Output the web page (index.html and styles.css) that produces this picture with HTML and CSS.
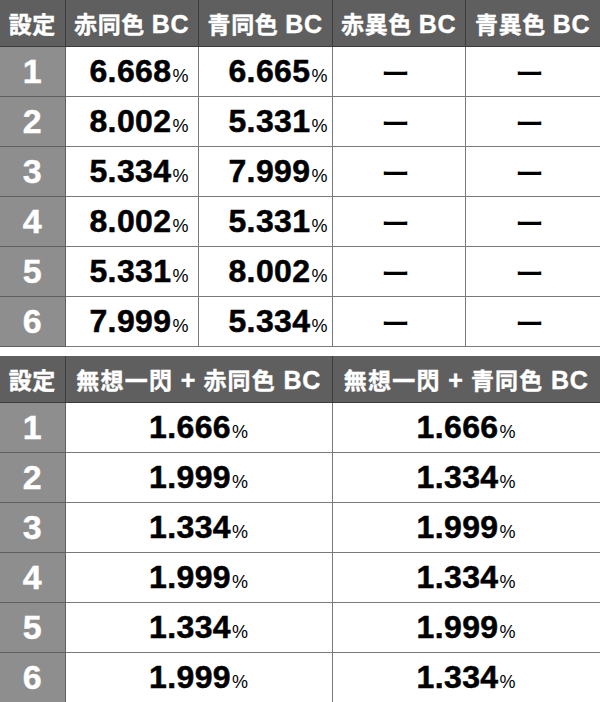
FILE: index.html
```html
<!DOCTYPE html>
<html lang="ja">
<head>
<meta charset="utf-8">
<link rel="stylesheet" href="styles.css">
</head>
<body>
<div class="page">
<table class="tbl t1">
  <colgroup><col class="c-set"><col class="c-a"><col class="c-b"><col class="c-c"><col class="c-d"></colgroup>
  <thead>
    <tr><th>設定</th><th>赤同色 <span class="en">BC</span></th><th>青同色 <span class="en">BC</span></th><th>赤異色 <span class="en">BC</span></th><th>青異色 <span class="en">BC</span></th></tr>
  </thead>
  <tbody>
    <tr><td class="lbl">1</td><td class="num n1">6.668<span class="pc">%</span></td><td class="num n2">6.665<span class="pc">%</span></td><td class="dash">ー</td><td class="dash">ー</td></tr>
    <tr><td class="lbl">2</td><td class="num n1">8.002<span class="pc">%</span></td><td class="num n2">5.331<span class="pc">%</span></td><td class="dash">ー</td><td class="dash">ー</td></tr>
    <tr><td class="lbl">3</td><td class="num n1">5.334<span class="pc">%</span></td><td class="num n2">7.999<span class="pc">%</span></td><td class="dash">ー</td><td class="dash">ー</td></tr>
    <tr><td class="lbl">4</td><td class="num n1">8.002<span class="pc">%</span></td><td class="num n2">5.331<span class="pc">%</span></td><td class="dash">ー</td><td class="dash">ー</td></tr>
    <tr><td class="lbl">5</td><td class="num n1">5.331<span class="pc">%</span></td><td class="num n2">8.002<span class="pc">%</span></td><td class="dash">ー</td><td class="dash">ー</td></tr>
    <tr><td class="lbl">6</td><td class="num n1">7.999<span class="pc">%</span></td><td class="num n2">5.334<span class="pc">%</span></td><td class="dash">ー</td><td class="dash">ー</td></tr>
  </tbody>
</table>
<table class="tbl t2">
  <colgroup><col class="c-set"><col class="c-w"><col class="c-w2"></colgroup>
  <thead>
    <tr><th>設定</th><th class="wide">無想一閃 <span class="en">+</span> 赤同色 <span class="en">BC</span></th><th class="wide">無想一閃 <span class="en">+</span> 青同色 <span class="en">BC</span></th></tr>
  </thead>
  <tbody>
    <tr><td class="lbl">1</td><td class="num c">1.666<span class="pc">%</span></td><td class="num c">1.666<span class="pc">%</span></td></tr>
    <tr><td class="lbl">2</td><td class="num c">1.999<span class="pc">%</span></td><td class="num c">1.334<span class="pc">%</span></td></tr>
    <tr><td class="lbl">3</td><td class="num c">1.334<span class="pc">%</span></td><td class="num c">1.999<span class="pc">%</span></td></tr>
    <tr><td class="lbl">4</td><td class="num c">1.999<span class="pc">%</span></td><td class="num c">1.334<span class="pc">%</span></td></tr>
    <tr><td class="lbl">5</td><td class="num c">1.334<span class="pc">%</span></td><td class="num c">1.999<span class="pc">%</span></td></tr>
    <tr><td class="lbl">6</td><td class="num c">1.999<span class="pc">%</span></td><td class="num c">1.334<span class="pc">%</span></td></tr>
  </tbody>
</table>
</div>
</body>
</html>
```

FILE: styles.css
```css
html, body {
  margin: 0;
  padding: 0;
  background: #ffffff;
}
.page {
  width: 600px;
  display: flex;
  flex-direction: column;
  gap: 9px;
  font-family: "Liberation Sans", "Noto Sans CJK JP", sans-serif;
}
.tbl {
  width: 600px;
  border-collapse: collapse;
  table-layout: fixed;
}
.c-set { width: 65px; }
.c-a { width: 133px; }
.c-b { width: 134px; }
.c-c { width: 133px; }
.c-d { width: 135px; }
.c-w { width: 267px; }
.c-w2 { width: 268px; }
.tbl th {
  height: 46px;
  padding: 0;
  background: #5f5f5f;
  color: #ffffff;
  font-size: 23px;
  font-weight: bold;
  letter-spacing: 0.6px;
  -webkit-text-stroke: 0.4px #ffffff;
  text-align: center;
  white-space: nowrap;
  border-left: 1px solid #3c3c3c;
  border-right: 1px solid #3c3c3c;
  border-bottom: 1px solid #3c3c3c;
}
.tbl th .en {
  font-size: 25px;
  letter-spacing: 0.5px;
}
.tbl th.wide { letter-spacing: 1.2px; }
.tbl th:first-child { border-left: none; }
.tbl td {
  height: 49px;
  padding: 0;
  border: 1px solid #7a7a7a;
  background: #ffffff;
  color: #000000;
}
.tbl td:first-child { border-left: none; }
.tbl td.lbl {
  background: #8e8e8e;
  color: #ffffff;
  font-size: 34px;
  font-weight: bold;
  text-align: center;
  -webkit-text-stroke: 0.4px #ffffff;
  border-color: #5f5f5f;
}
.num {
  font-size: 32px;
  font-weight: bold;
  letter-spacing: 0.4px;
  -webkit-text-stroke: 0.5px #000000;
  white-space: nowrap;
}
.n1 { text-align: right; padding-right: 9px !important; }
.n2 { text-align: right; padding-right: 4px !important; }
.c { text-align: center; }
.pc {
  font-size: 18px;
  font-weight: normal;
  letter-spacing: 0;
  -webkit-text-stroke: 0;
  margin-left: 1px;
}
.dash {
  text-align: center;
  font-family: "Noto Sans CJK JP", sans-serif;
  font-size: 29px;
  font-weight: 500;
  padding-right: 6px !important;
}
```
